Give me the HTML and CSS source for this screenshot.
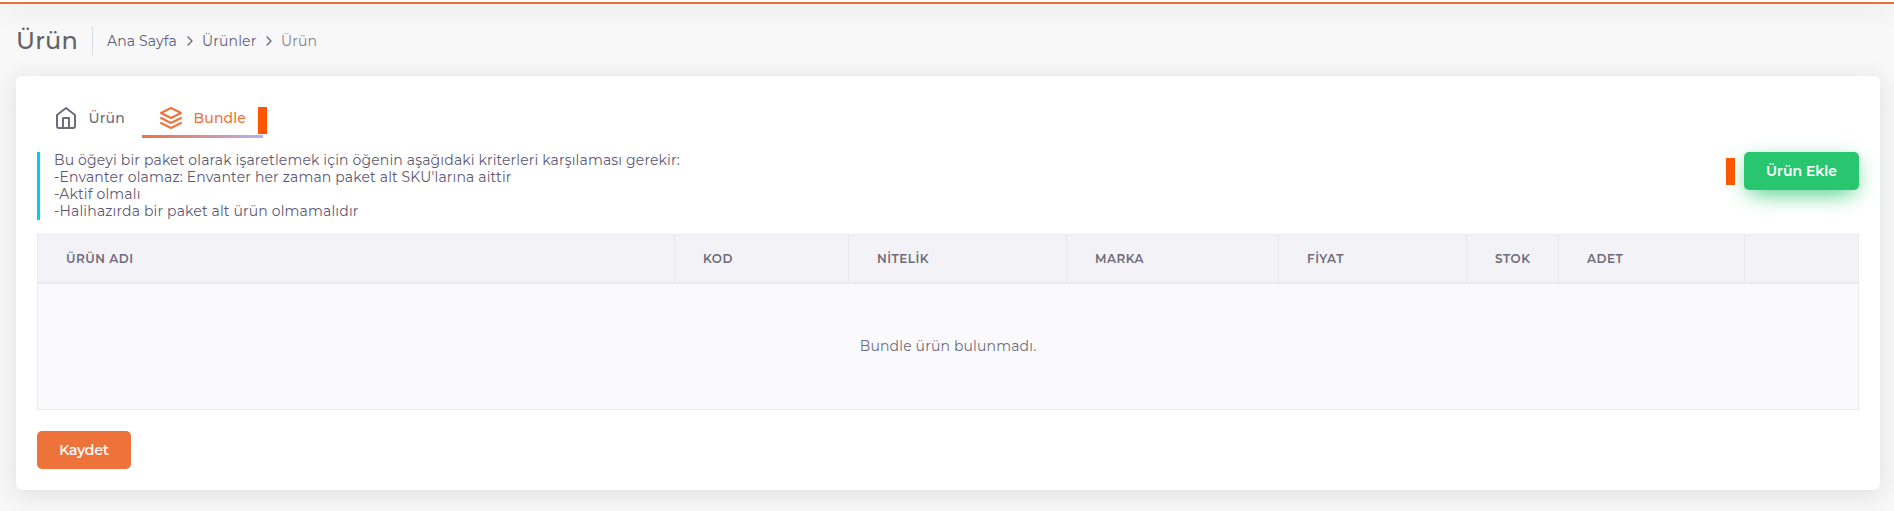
FILE: index.html
```html
<!DOCTYPE html>
<html lang="tr">
<head>
<meta charset="utf-8">
<title>Ürün</title>
<link rel="stylesheet" href="styles.css">
</head>
<body>
<div class="topbar"></div>
<header class="page-header">
  <h1 class="page-title">Ürün</h1>
  <nav class="breadcrumb">
    <a class="crumb crumb-home">Ana Sayfa</a>
    <svg class="chevron" viewBox="0 0 24 24"><path d="M9 18l6-6-6-6"/></svg>
    <a class="crumb crumb-list">Ürünler</a>
    <svg class="chevron" viewBox="0 0 24 24"><path d="M9 18l6-6-6-6"/></svg>
    <span class="crumb crumb-current">Ürün</span>
  </nav>
</header>
<main class="card">
  <div class="tabs">
    <a class="tab tab-product">
      <svg class="tab-icon" viewBox="0 0 24 24"><path d="M3 9l9-7 9 7v11a2 2 0 0 1-2 2H5a2 2 0 0 1-2-2z"/><path d="M9 22V12h6v10"/></svg>
      <span class="tab-text">Ürün</span>
    </a>
    <a class="tab tab-bundle active">
      <svg class="tab-icon" viewBox="0 0 24 24"><path d="M12 2L2 7l10 5 10-5-10-5z"/><path d="M2 17l10 5 10-5"/><path d="M2 12l10 5 10-5"/></svg>
      <span class="tab-text">Bundle</span>
      <span class="marker tab-marker"></span>
    </a>
  </div>
  <div class="info-row">
    <div class="info">
      <div class="line">Bu öğeyi bir paket olarak işaretlemek için öğenin aşağıdaki kriterleri karşılaması gerekir:</div>
      <div class="line">-Envanter olamaz: Envanter her zaman paket alt SKU'larına aittir</div>
      <div class="line">-Aktif olmalı</div>
      <div class="line">-Halihazırda bir paket alt ürün olmamalıdır</div>
    </div>
    <div class="actions">
      <span class="marker"></span>
      <button class="btn btn-add">Ürün Ekle</button>
    </div>
  </div>
  <div class="table">
    <div class="thead">
      <div class="th">ÜRÜN ADI</div>
      <div class="th">KOD</div>
      <div class="th">NİTELİK</div>
      <div class="th">MARKA</div>
      <div class="th">FİYAT</div>
      <div class="th">STOK</div>
      <div class="th">ADET</div>
      <div class="th"></div>
    </div>
    <div class="empty">Bundle ürün bulunmadı.</div>
  </div>
  <button class="btn btn-save">Kaydet</button>
</main>
</body>
</html>
```
FILE: styles.css
```css
* { box-sizing: border-box; }
body {
  margin: 0;
  height: 511px;
  overflow: hidden;
  background: #f8f8f8;
  font-family: Montserrat, Inter, sans-serif;
  font-size: 14px;
  letter-spacing: .15px;
  color: #6e6b7b;
}
.topbar {
  height: 4px;
  background: #fff;
  border-bottom: 2px solid #e8703a;
  box-shadow: 0 4px 24px rgba(34, 41, 47, .18);
}
.page-header {
  display: flex;
  align-items: center;
  height: 72px;
  padding: 0 17px 0 16px;
}
.page-title {
  margin: 1px 0 0;
  width: 76px;
  font-size: 24px;
  font-weight: 500;
  line-height: 28px;
  color: #636363;
}
.breadcrumb {
  display: flex;
  align-items: center;
  height: 28px;
  padding-left: 14px;
  border-left: 1px solid #d6dce1;
  line-height: 20px;
  margin-top: 2px;
}
.crumb { color: #5e5c7d; }
.crumb-home { width: 75px; }
.crumb-list { width: 59px; }
.crumb-current { color: #83808f; }
.chevron { width: 16px; height: 16px; margin-right: 4px; fill: none; stroke: #6e6b7b; stroke-width: 2; stroke-linecap: round; stroke-linejoin: round; }
.card {
  width: 1864px;
  height: 414px;
  margin-left: 16px;
  padding: 21px;
  border-radius: 6px;
  background: #fff;
  box-shadow: 0 4px 24px rgba(34, 41, 47, .12);
}
.tabs { display: flex; height: 41px; }
.tab { display: flex; align-items: center; height: 41px; padding-left: 17px; font-weight: 500; }
.tab-product { width: 105px; }
.tab-bundle {
  position: relative;
  width: 121px;
  color: #ee733b;
}
.tab-bundle::after {
  content: "";
  position: absolute;
  left: 0; right: 0; bottom: 0;
  height: 3px;
  background: linear-gradient(to right, #ee733b, #b9aef5);
}
.tab-icon { width: 24px; height: 24px; margin-right: 10.5px; fill: none; stroke: currentColor; stroke-width: 2; stroke-linecap: round; stroke-linejoin: round; }
.marker { width: 9px; height: 27px; background: #ff5500; }
.tab-marker { position: absolute; left: 116px; top: 10px; z-index: 1; }
.info-row { display: flex; justify-content: space-between; height: 68px; margin-top: 14px; }
.info { border-left: 3px solid #00cfe8; padding-left: 14px; line-height: 17px; color: #5e5873; white-space: nowrap; }
.actions { display: flex; align-items: center; gap: 9px; height: 38px; }
.btn {
  display: block;
  height: 38px;
  padding: 0;
  border: 0;
  border-radius: 5px;
  color: #fff;
  font: 500 14px Montserrat, Inter, sans-serif;
}
.btn-add { width: 115px; background: #28c76f; box-shadow: 0 8px 25px -8px #28c76f, 0 4px 18px rgba(40, 199, 111, .2); font-weight: 600; }
.btn-save { width: 94px; margin-top: 21px; background: #ee733b; -webkit-text-stroke: .2px #fff; }
.table { height: 176px; margin-top: 14px; border: 1px solid #ebe9f1; background: #fafafc; }
.thead {
  display: grid;
  grid-template-columns: 637px 174px 218px 212px 188px 92px 186px 1fr;
  height: 49px;
  background: #f3f2f7;
  border-bottom: 2px solid #ebe9f1;
}
.th { padding-left: 28px; line-height: 48px; font-size: 12px; font-weight: 600; letter-spacing: .5px; border-right: 1px solid #ebe9f1; }
.th:last-child { border-right: 0; }
.empty { height: 125px; line-height: 125px; text-align: center; }
```
